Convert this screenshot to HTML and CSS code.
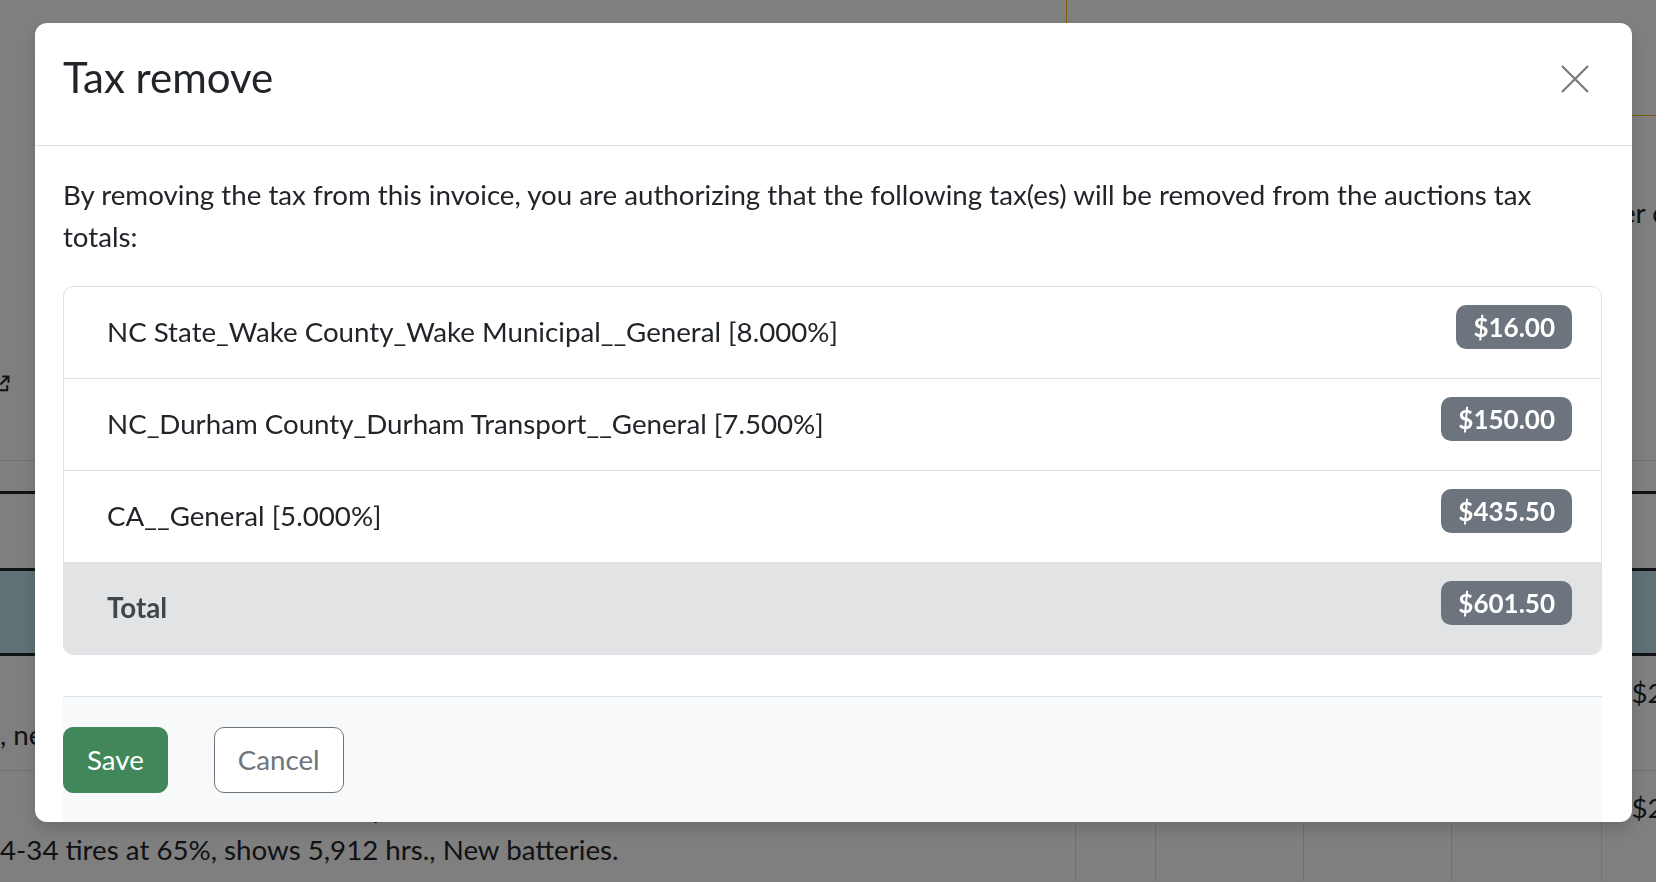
FILE: index.html
```html
<!DOCTYPE html>
<html lang="en">

<head>
    <meta charset="UTF-8">
    <meta name="viewport" content="width=device-width, initial-scale=1.0">
    <title>Invoice - Tax remove</title>
    <link rel="stylesheet" href="styles.css">
</head>

<body>
    <!-- Invoice page behind the modal -->
    <div class="page">
        <div class="notice-band">
            <div class="notice-box"></div>
        </div>
        <div class="meta-row">Buyer comments</div>
        <div class="link-row">
            <svg class="ext-icon" width="20" height="20" viewBox="0 0 16 16" fill="none" stroke="#212529" stroke-width="1.6">
                <path d="M7 3H3v10h10V9" />
                <path d="M9 2h5v5M14 2L7.5 8.5" />
            </svg>
        </div>

        <table class="lots">
            <colgroup>
                <col style="width: 1075px">
                <col style="width: 80px">
                <col style="width: 148px">
                <col style="width: 148px">
                <col style="width: 150px">
                <col style="width: 200px">
            </colgroup>
            <thead>
                <tr>
                    <th>Description</th>
                    <th>Qty</th>
                    <th>Price</th>
                    <th>Fee</th>
                    <th>Tax</th>
                    <th>Total</th>
                </tr>
            </thead>
            <tbody>
                <tr class="row-a">
                    <td>Lot 112</td>
                    <td>1</td>
                    <td></td>
                    <td></td>
                    <td></td>
                    <td></td>
                </tr>
                <tr class="row-info">
                    <td></td>
                    <td></td>
                    <td></td>
                    <td></td>
                    <td></td>
                    <td></td>
                </tr>
                <tr class="row-line">
                    <td class="desc">John Deere 4440 tractor, quad range, cab<br>, new seat, front weights.</td>
                    <td>1</td>
                    <td></td>
                    <td></td>
                    <td></td>
                    <td class="amount">$2,000.00</td>
                </tr>
                <tr class="row-line">
                    <td class="desc">John Deere 4640 tractor, power shift, 18.4-<br>4-34 tires at 65%, shows 5,912 hrs., New batteries.</td>
                    <td>1</td>
                    <td></td>
                    <td></td>
                    <td></td>
                    <td class="amount">$2,150.00</td>
                </tr>
            </tbody>
        </table>
    </div>

    <div class="backdrop"></div>

    <!-- Tax remove modal -->
    <div class="modal">
        <div class="modal-header">
            <h4 class="modal-title">Tax remove</h4>
            <svg class="modal-close" width="30" height="30" viewBox="0 0 30 30" fill="none" stroke="#7a7a7a" stroke-width="2.2">
                <path d="M2 2L28 28M28 2L2 28" />
            </svg>
        </div>
        <div class="modal-body">
            <p class="intro">By removing the tax from this invoice, you are authorizing that the following tax(es) will be removed from the auctions tax totals:</p>

            <div class="tax-list">
                <div class="tax-row">
                    <span class="tax-name">NC State_Wake County_Wake Municipal__General [8.000%]</span>
                    <span class="badge">$16.00</span>
                </div>
                <div class="tax-row">
                    <span class="tax-name">NC_Durham County_Durham Transport__General [7.500%]</span>
                    <span class="badge">$150.00</span>
                </div>
                <div class="tax-row">
                    <span class="tax-name">CA__General [5.000%]</span>
                    <span class="badge">$435.50</span>
                </div>
                <div class="tax-row total">
                    <span class="tax-name">Total</span>
                    <span class="badge">$601.50</span>
                </div>
            </div>

            <div class="modal-footer">
                <button class="btn btn-save">Save</button>
                <button class="btn btn-cancel">Cancel</button>
            </div>
        </div>
    </div>
</body>

</html>
```

FILE: styles.css
```css
/* Base */
body {
    margin: 0;
    height: 882px;
    overflow: hidden;
    font-family: Lato, "Liberation Sans", sans-serif;
    font-size: 27.7px;
    line-height: 42px;
    color: #212529;
    background-color: #ffffff;
}

/* Page behind the modal */
.page {
    width: 1900px;
}

.notice-band {
    display: flex;
    height: 116px;
}

.notice-box {
    flex: 1;
    margin-left: 1066px;
    border-left: 1px solid #ffc107;
    border-bottom: 1px solid #ffc107;
}

.meta-row {
    margin-top: 76px;
    padding-left: 1574px;
    white-space: nowrap;
}

.link-row {
    height: 20px;
    margin-top: 140px;
}

.ext-icon {
    display: block;
    margin-left: -9px;
}

.lots {
    margin-top: 66px;
    border-collapse: collapse;
    table-layout: fixed;
    width: 1801px;
}

.lots th,
.lots td {
    padding: 16px 8px 14px;
    text-align: left;
    vertical-align: top;
    border-left: 1px solid #dee2e6;
    white-space: nowrap;
    overflow: hidden;
}

.lots th:first-child,
.lots td:first-child {
    border-left: none;
    padding-left: 0;
}

.lots td.desc {
    white-space: normal;
    text-indent: 60px;
}

.lots thead th {
    padding: 0;
    font-size: 0;
    line-height: 0;
    border-top: 1px solid #dee2e6;
    border-bottom: 3px solid #212529;
    height: 30px;
}

.row-a td {
    height: 74px;
    padding: 0;
    font-size: 0;
    border-bottom: 3px solid #212529;
}

.row-info td {
    height: 82px;
    padding: 0;
    background: #bee3ea;
    border-bottom: 3px solid #212529;
}

.row-line td {
    border-bottom: 1px solid #dee2e6;
}

.lots td.amount {
    padding-left: 30px;
}

/* Modal */
.backdrop {
    position: fixed;
    top: 0;
    left: 0;
    width: 100%;
    height: 100%;
    background: rgba(0, 0, 0, 0.5);
}

.modal {
    position: fixed;
    top: 23px;
    left: 35px;
    width: 1597px;
    height: 799px;
    background: #ffffff;
    border-radius: 12px;
    box-shadow: 0 8px 16px rgba(0, 0, 0, 0.15);
    overflow: hidden;
    display: flex;
    flex-direction: column;
}

.modal-header {
    flex-shrink: 0;
    display: flex;
    align-items: center;
    justify-content: space-between;
    height: 123px;
    padding: 0 42px 10px 28px;
    box-sizing: border-box;
    border-bottom: 1px solid #dee2e6;
}

.modal-title {
    margin: 0 0 4px;
    font-size: 42px;
    font-weight: 400;
    line-height: 63px;
}

.modal-close {
    cursor: pointer;
}

.modal-body {
    flex: 1 0 auto;
    display: flex;
    flex-direction: column;
    padding: 28px 30px 0 28px;
}

.intro {
    margin: 0 0 28px;
}

.tax-list {
    flex-shrink: 0;
    border: 1px solid #dee2e6;
    border-radius: 10px;
    overflow: hidden;
}

.tax-row {
    display: flex;
    justify-content: space-between;
    align-items: flex-start;
    padding: 18px 29px 25px 43px;
    border-top: 1px solid #dee2e6;
}

.tax-row:first-child {
    border-top: none;
}

.tax-name {
    padding-top: 6px;
}

.badge {
    background: #6c757d;
    color: #ffffff;
    font-size: 26px;
    font-weight: 700;
    line-height: 1;
    padding: 9px 17px;
    border-radius: 10px;
}

.tax-row.total {
    background: #e2e3e5;
    color: #41464b;
    font-weight: 700;
}

.modal-footer {
    flex: 1 0 auto;
    display: flex;
    align-items: flex-start;
    gap: 46px;
    margin-top: 41px;
    padding: 30px 0;
    background: #f8f9fa;
    border-top: 1px solid #dee2e6;
}

.btn {
    font-family: inherit;
    font-size: 27.7px;
    line-height: 42px;
    padding: 11px 23px;
    border-radius: 10px;
    cursor: pointer;
}

.btn-save {
    background: #41875a;
    border: 1px solid #41875a;
    color: #ffffff;
}

.btn-cancel {
    background: #ffffff;
    border: 1px solid #6c757d;
    color: #6c757d;
}
```
